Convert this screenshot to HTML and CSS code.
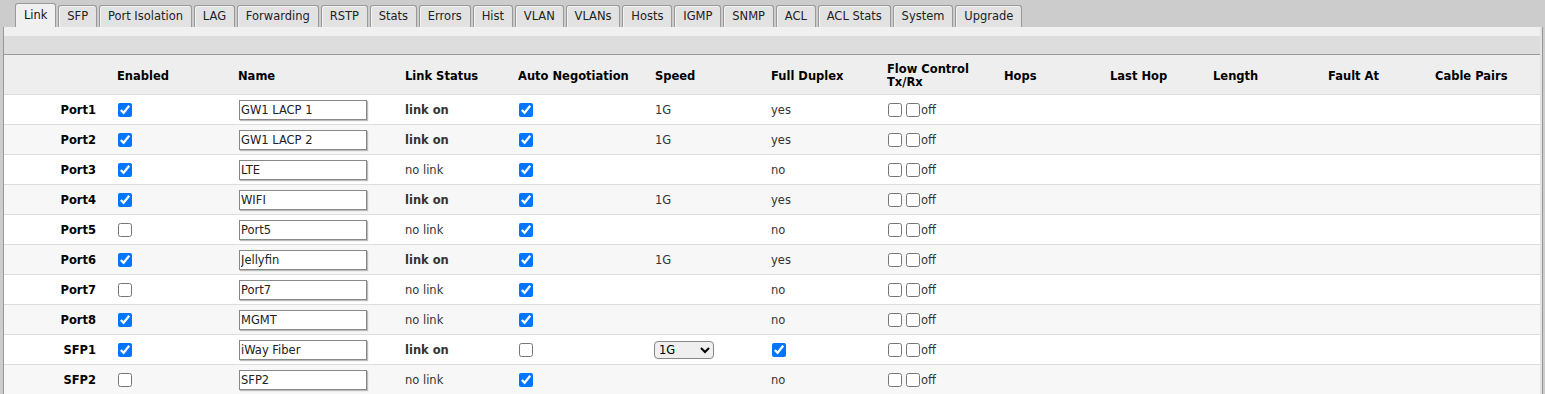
FILE: index.html
```html
<!DOCTYPE html>
<html lang="en">
<head>
    <meta charset="UTF-8">
    <title>Link</title>
    <link rel="stylesheet" href="styles.css">
</head>
<body>
    <div class="tabs">
        <span class="tab active">Link</span>
        <span class="tab">SFP</span>
        <span class="tab">Port Isolation</span>
        <span class="tab">LAG</span>
        <span class="tab">Forwarding</span>
        <span class="tab">RSTP</span>
        <span class="tab">Stats</span>
        <span class="tab">Errors</span>
        <span class="tab">Hist</span>
        <span class="tab">VLAN</span>
        <span class="tab">VLANs</span>
        <span class="tab">Hosts</span>
        <span class="tab">IGMP</span>
        <span class="tab">SNMP</span>
        <span class="tab">ACL</span>
        <span class="tab">ACL Stats</span>
        <span class="tab">System</span>
        <span class="tab">Upgrade</span>
    </div>

    <div class="panel">
        <div class="strip"></div>
        <div class="band"></div>
        <table class="grid">
            <colgroup>
                <col style="width:113px">
                <col style="width:121px">
                <col style="width:167px">
                <col style="width:113px">
                <col style="width:137px">
                <col style="width:116px">
                <col style="width:116px">
                <col style="width:117px">
                <col style="width:106px">
                <col style="width:103px">
                <col style="width:115px">
                <col style="width:107px">
                <col style="width:105px">
            </colgroup>
            <thead>
                <tr>
                    <th></th>
                    <th>Enabled</th>
                    <th>Name</th>
                    <th>Link Status</th>
                    <th>Auto Negotiation</th>
                    <th>Speed</th>
                    <th>Full Duplex</th>
                    <th>Flow Control<br>Tx/Rx</th>
                    <th>Hops</th>
                    <th>Last Hop</th>
                    <th>Length</th>
                    <th>Fault At</th>
                    <th>Cable Pairs</th>
                </tr>
            </thead>
            <tbody id="rows"></tbody>
        </table>
    </div>

    <script>
        // datos de los puertos
        var ports = [
            ['Port1', 1, 'GW1 LACP 1', 1, 1, '1G', 'yes'],
            ['Port2', 1, 'GW1 LACP 2', 1, 1, '1G', 'yes'],
            ['Port3', 1, 'LTE', 0, 1, '', 'no'],
            ['Port4', 1, 'WIFI', 1, 1, '1G', 'yes'],
            ['Port5', 0, 'Port5', 0, 1, '', 'no'],
            ['Port6', 1, 'Jellyfin', 1, 1, '1G', 'yes'],
            ['Port7', 0, 'Port7', 0, 1, '', 'no'],
            ['Port8', 1, 'MGMT', 0, 1, '', 'no'],
            ['SFP1', 1, 'iWay Fiber', 1, 0, 'select', 'check'],
            ['SFP2', 0, 'SFP2', 0, 1, '', 'no']
        ];

        function box(on) {
            return '<input type="checkbox" class="cb"' + (on ? ' checked' : '') + '>';
        }

        var html = '';
        ports.forEach(function (p) {
            var speed = p[5] === 'select'
                ? '<select class="speed"><option>1G</option><option>100M</option><option>10M</option></select>'
                : p[5];
            var duplex = p[6] === 'check' ? box(true) : p[6];
            html += '<tr>' +
                '<td class="label">' + p[0] + '</td>' +
                '<td>' + box(p[1]) + '</td>' +
                '<td><input type="text" class="name" value="' + p[2] + '"></td>' +
                '<td' + (p[3] ? ' class="on"' : '') + '>' + (p[3] ? 'link on' : 'no link') + '</td>' +
                '<td>' + box(p[4]) + '</td>' +
                '<td>' + speed + '</td>' +
                '<td>' + duplex + '</td>' +
                '<td class="flow"><input type="checkbox" class="cb"><input type="checkbox" class="cb"><span class="off">off</span></td>' +
                '<td></td><td></td><td></td><td></td><td></td>' +
                '</tr>';
        });
        document.getElementById('rows').innerHTML = html;
    </script>
</body>
</html>
```

FILE: styles.css
```css
body {
    margin: 0;
    background-color: #cccccc;
    font-family: "DejaVu Sans", Verdana, sans-serif;
    font-size: 11.5px;
    color: #333;
}
.tabs {
    display: flex;
    gap: 2px;
    padding: 4px 0 0 15px;
    height: 23px;
    align-items: flex-end;
}
.tab {
    height: 22px;
    line-height: 21px;
    padding: 0 7.9px;
    border: 1px solid #999;
    border-bottom: none;
    border-radius: 3px 3px 0 0;
    background-color: #e2e2e2;
    box-shadow: inset 1px 1px 0 #f2f2f2;
    color: #222;
    box-sizing: border-box;
}
.tab.active {
    height: 24px;
    line-height: 23px;
    background-color: #f0f0f0;
    color: #111;
}
.panel {
    margin-left: 3px;
    width: 1536px;
    border-left: 1px solid #999;
    border-right: 2px solid #e2e2e2;
    box-shadow: 1px 0 0 #999;
    background-color: #fff;
}
.strip {
    height: 9px;
    background-color: #f0f0f0;
}
.band {
    height: 18px;
    background-color: #dddddd;
    border-bottom: 1px solid #999;
}
.grid {
    width: 1536px;
    table-layout: fixed;
    border-collapse: collapse;
}
.grid th {
    height: 36px;
    padding: 3px 0 0 0;
    text-align: left;
    background-color: #eeeeee;
    color: #000;
    font-weight: bold;
    line-height: 13px;
    border-bottom: 1px solid #ddd;
}
.grid td {
    height: 29px;
    padding: 0;
    border-bottom: 1px solid #ddd;
    white-space: nowrap;
}
.grid tbody tr:nth-child(even) td {
    background-color: #f7f7f7;
}
.grid td.label {
    text-align: right;
    padding-right: 21px;
    font-weight: bold;
    color: #000;
}
.grid td.on {
    font-weight: bold;
}
.cb {
    width: 14px;
    height: 14px;
    margin: 0 0 0 1px;
    vertical-align: middle;
}
.flow .cb {
    margin: 0 4px 0 1px;
}
.flow .cb + .cb {
    margin: 0 1px 0 0;
}
.off {
    vertical-align: middle;
}
.name {
    width: 128px;
    height: 20px;
    box-sizing: border-box;
    margin: 0 0 0 1px;
    padding: 0 1px;
    border: 1px solid #888;
    box-shadow: 1px 1px 1px #bbb;
    font-family: "DejaVu Sans", Verdana, sans-serif;
    font-size: 11.5px;
    color: #222;
    vertical-align: middle;
}
.speed {
    width: 60px;
    height: 18px;
    margin-left: -1px;
    font-family: "DejaVu Sans", Verdana, sans-serif;
    font-size: 11.5px;
    border: 1px solid #888;
    border-radius: 4px;
    background-color: #efefef;
    vertical-align: middle;
}
```
